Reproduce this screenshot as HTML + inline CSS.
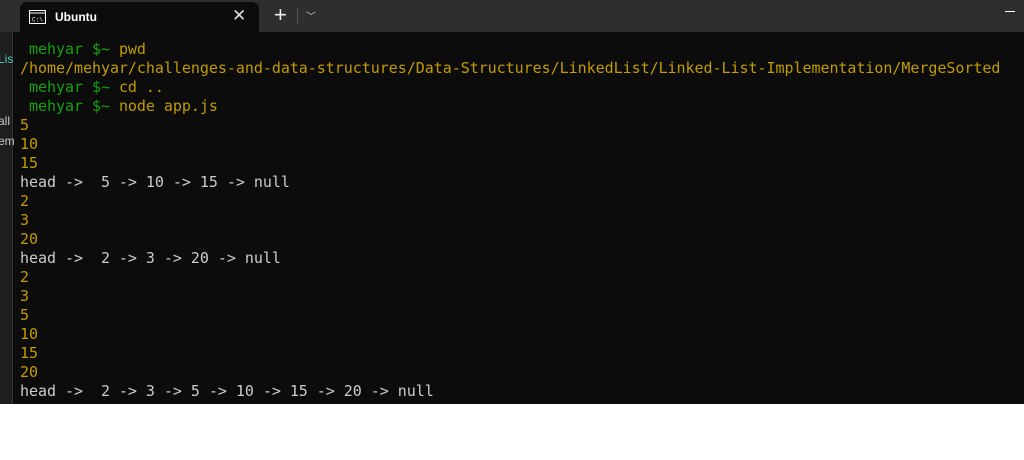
<!DOCTYPE html><html><head><style>
body{margin:0;width:1024px;height:460px;background:#fff;position:relative;overflow:hidden;font-family:"Liberation Sans",sans-serif}
.bar{position:absolute;left:0;top:0;width:1024px;height:32px;background:#2e2e2e}
.tab{position:absolute;left:20px;top:2px;width:239px;height:30px;background:#0c0c0c;border-radius:7px 7px 0 0}
.term{position:absolute;left:0;top:32px;width:1024px;height:372px;background:#0c0c0c}
.side{position:absolute;left:0;top:32px;width:12px;height:372px;background:#1e1e1e;border-right:1px solid #333}
pre{position:absolute;left:20px;top:40px;margin:0;font:15px/19px "DejaVu Sans Mono",monospace;letter-spacing:-0.037px;color:#cccccc}
.g{color:#13a10e}.y{color:#c19c00}
</style></head><body>
<div class="bar"></div>
<div class="tab">
<svg style="position:absolute;left:9px;top:8px" width="17" height="14"><rect x="0.5" y="0.5" width="16" height="13" fill="none" stroke="#fff"/><line x1="0.5" y1="3" x2="16.5" y2="3" stroke="#fff"/><text x="3" y="11.5" font-size="6" fill="#fff" font-family="Liberation Mono">C:\</text></svg>
<span style="position:absolute;left:35px;top:8px;color:#fff;font-size:12px;font-weight:bold">Ubuntu</span>
<span style="position:absolute;left:212px;top:4px;color:#ddd;font-size:17px">✕</span>
</div>
<span style="position:absolute;left:274px;top:2px;color:#eee;font-size:22px">+</span>
<div style="position:absolute;left:297px;top:8px;width:1px;height:16px;background:#555"></div>
<span style="position:absolute;left:306px;top:8px;color:#ccc;font-size:10px">﹀</span>
<div style="position:absolute;left:1005px;top:11px;width:10px;height:1px;background:#fff"></div>
<div class="term"></div>
<div class="side"><div style="position:absolute;top:82px;color:#ccc;font-size:12px;left:-2px">all</div><div style="position:absolute;top:102px;color:#ccc;font-size:12px;left:-2px">em</div><div style="position:absolute;top:20px;color:#4ec9b0;font-size:12px;left:-2px">Lis</div></div>
<pre><span class="g"> mehyar $~ </span><span class="y">pwd
/home/mehyar/challenges-and-data-structures/Data-Structures/LinkedList/Linked-List-Implementation/MergeSorted</span>
<span class="g"> mehyar $~ </span><span class="y">cd ..</span>
<span class="g"> mehyar $~ </span><span class="y">node app.js
5
10
15</span>
head ->  5 -> 10 -> 15 -> null
<span class="y">2
3
20</span>
head ->  2 -> 3 -> 20 -> null
<span class="y">2
3
5
10
15
20</span>
head ->  2 -> 3 -> 5 -> 10 -> 15 -> 20 -> null</pre>
</body></html>
